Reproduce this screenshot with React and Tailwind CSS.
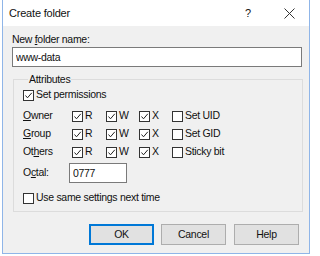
import React from 'react';

const Box = ({ checked }) => (
  <span className="inline-flex w-[11px] h-[11px] border border-[#333333] bg-white shrink-0">
    {checked && (
      <svg width="9" height="9" viewBox="0 0 9 9" fill="none">
        <polyline points="1.5,4.5 3.5,6.8 7.8,1.8" stroke="#222222" strokeWidth="1" />
      </svg>
    )}
  </span>
);

const Check = ({ checked, label, className = '' }) => (
  <span className={`flex items-center gap-[2px] ${className}`}>
    <Box checked={checked} />
    <span>{label}</span>
  </span>
);

const PermRow = ({ name, extra }) => (
  <div className="flex items-center h-[18px]">
    <span className="w-[49px]">{name}</span>
    <Check checked label="R" className="w-[34px]" />
    <Check checked label="W" className="w-[33px]" />
    <Check checked label="X" className="w-[33px]" />
    <Check label={extra} />
  </div>
);

// Create folder dialog
export default function App() {
  return (
    <div
      className="w-[320px] h-[256px] bg-white text-[10.5px] text-[#111111] tracking-[-0.3px]"
      style={{ fontFamily: '"Liberation Sans", Arial, sans-serif' }}
    >
      <div className="ml-[2px] w-[308px] h-[254px] border-x border-b border-[#8fb5e8] flex flex-col">
        {/* Title bar */}
        <div className="h-[26px] bg-white flex items-center pl-[6px] pr-[2px] text-[11px] tracking-[-0.2px]">
          <span className="flex-1">Create folder</span>
          <span className="w-[46px] text-center">?</span>
          <span className="w-[36px] flex justify-center">
            <svg width="11" height="11" viewBox="0 0 11 11" fill="none">
              <path d="M0.5 0.5L10.5 10.5M10.5 0.5L0.5 10.5" stroke="#333333" strokeWidth="1" />
            </svg>
          </span>
        </div>

        {/* Body */}
        <div className="flex-1 bg-[#f0f0f0] pl-[9px] pt-[6px]">
          <div className="h-[14px] leading-[14px]">
            New <span className="underline">f</span>older name:
          </div>
          <input
            defaultValue="www-data"
            className="mt-[1px] block w-[290px] h-[20px] border border-[#7a7a7a] bg-white px-[3px] outline-none"
          />

          {/* Attributes group */}
          <fieldset className="mt-[5px] ml-[1px] w-[290px] border border-[#dcdcdc] pl-[9px] pb-[4px]">
            <legend className="ml-[5px] px-[1px] h-[14px] leading-[14px]">Attributes</legend>
            <div className="flex items-center h-[18px]">
              <Check checked label="Set permissions" />
            </div>
            <div className="mt-[3px]">
              <PermRow name={<><span className="underline">O</span>wner</>} extra="Set UID" />
              <PermRow name={<><span className="underline">G</span>roup</>} extra="Set GID" />
              <PermRow name={<>Ot<span className="underline">h</span>ers</>} extra="Sticky bit" />
            </div>
            <div className="mt-[2px] flex items-center h-[20px]">
              <span className="w-[46px]">O<span className="underline">c</span>tal:</span>
              <input
                defaultValue="0777"
                className="w-[58px] h-[20px] border border-[#7a7a7a] bg-white px-[3px] outline-none"
              />
            </div>
            <div className="mt-[6px] flex items-center h-[18px]">
              <Check label="Use same settings next time" />
            </div>
          </fieldset>

          {/* Buttons */}
          <div className="mt-[12px] flex w-[287px] justify-end">
            <button className="w-[65px] h-[21px] border-2 border-[#0078d7] bg-[#e1e1e1]">OK</button>
            <button className="ml-[7px] w-[65px] h-[21px] border border-[#adadad] bg-[#e1e1e1]">Cancel</button>
            <button className="ml-[8px] w-[65px] h-[21px] border border-[#adadad] bg-[#e1e1e1]">Help</button>
          </div>
        </div>
      </div>
    </div>
  );
}
